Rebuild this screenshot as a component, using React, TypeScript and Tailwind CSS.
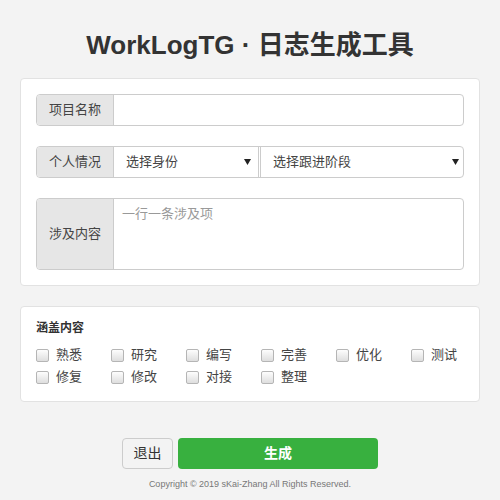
import { useState } from "react";

const FONT = { fontFamily: '"Liberation Sans", "Noto Sans CJK SC", Arial, sans-serif' };

const items = ["熟悉", "研究", "编写", "完善", "优化", "测试", "修复", "修改", "对接", "整理"];

function Arrow() {
  return (
    <svg width="7" height="6" viewBox="0 0 7 6" className="shrink-0">
      <path d="M0 0 L7 0 L3.5 6 Z" fill="#222" />
    </svg>
  );
}

function Check({ label }: { label: string }) {
  const [on, setOn] = useState(false);
  return (
    <label className="flex h-[22px] items-center gap-[7px] cursor-pointer" onClick={() => setOn(!on)}>
      <span className="h-[13px] w-[13px] rounded-[2px] border border-[#b5b5b5] bg-gradient-to-b from-[#fdfdfd] to-[#dedede]" />
      <span className="text-[13px] text-[#444]">{label}</span>
    </label>
  );
}

export default function App() {
  return (
    <div className="min-h-[500px] w-full bg-[#f3f3f3] text-[#333]" style={FONT}>
      <h1 className="pt-[29px] text-center text-[26px] font-bold leading-[32px] text-[#333]">
        WorkLogTG · 日志生成工具
      </h1>

      <div className="mx-5 mt-[17px] rounded-[4px] border border-[#e2e2e2] bg-white p-[15px]">
        <div className="flex h-8 rounded-[4px] border border-[#cccccc]">
          <div className="flex w-[77px] shrink-0 items-center justify-center rounded-l-[4px] border-r border-[#cccccc] bg-[#e6e6e6] text-[13px] text-[#444]">
            项目名称
          </div>
          <input className="flex-1 rounded-r-[4px] px-3 text-[13px] outline-none" />
        </div>

        <div className="mt-5 flex h-8 rounded-[4px] border border-[#cccccc]">
          <div className="flex w-[77px] shrink-0 items-center justify-center rounded-l-[4px] border-r border-[#cccccc] bg-[#e6e6e6] text-[13px] text-[#444]">
            个人情况
          </div>
          <div className="flex w-[145px] shrink-0 items-center justify-between border-r border-[#cccccc] pl-3 pr-[7px] text-[13px] text-[#444]">
            <span>选择身份</span>
            <Arrow />
          </div>
          <div className="ml-[1px] flex flex-1 items-center justify-between border-l border-[#cccccc] pl-3 pr-[4px] text-[13px] text-[#444]">
            <span>选择跟进阶段</span>
            <Arrow />
          </div>
        </div>

        <div className="mt-5 flex h-[72px] rounded-[4px] border border-[#cccccc]">
          <div className="flex w-[77px] shrink-0 items-center justify-center rounded-l-[4px] border-r border-[#cccccc] bg-[#e6e6e6] text-[13px] text-[#444]">
            涉及内容
          </div>
          <textarea
            placeholder="一行一条涉及项"
            className="flex-1 resize-none rounded-r-[4px] px-2 pt-[5px] text-[13px] leading-[20px] text-[#444] outline-none placeholder:text-[#999]"
          />
        </div>
      </div>

      <div className="mx-5 mt-5 rounded-[4px] border border-[#e2e2e2] bg-white px-[15px] pb-[13px] pt-[14px]">
        <div className="text-[12px] font-bold leading-[14px] text-[#333]">涵盖内容</div>
        <div className="mt-[9px] grid grid-cols-[75px_75px_75px_75px_75px_75px]">
          {items.map((t) => (
            <Check key={t} label={t} />
          ))}
        </div>
      </div>

      <div className="mt-9 flex justify-center gap-[5px]">
        <button className="h-[31px] w-[51px] rounded-[4px] border border-[#cccccc] text-[14px] text-[#333]">
          退出
        </button>
        <button className="h-[31px] w-[200px] rounded-[4px] bg-[#38b03f] text-[14px] font-bold text-white">
          生成
        </button>
      </div>

      <p className="mt-[9px] text-center text-[9px] text-[#777]">
        Copyright © 2019 sKai-Zhang All Rights Reserved.
      </p>
    </div>
  );
}
